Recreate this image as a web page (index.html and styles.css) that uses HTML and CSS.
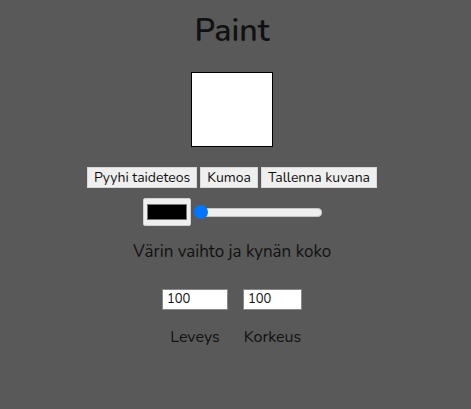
FILE: index.html
```html
<!DOCTYPE html>
<html>
<head>
<meta charset="utf-8">
<link rel="stylesheet" href="styles.css">
</head>
<body>
<div class="app">
  <h1 class="title">Paint</h1>
  <div class="canvas"></div>
  <div class="buttons">
    <button class="btn">Pyyhi taideteos</button>
    <button class="btn">Kumoa</button>
    <button class="btn">Tallenna kuvana</button>
  </div>
  <div class="tools">
    <div class="color"><div class="swatch"></div></div>
    <div class="slider"><div class="track"></div><div class="thumb"></div></div>
  </div>
  <p class="caption">Värin vaihto ja kynän koko</p>
  <div class="sizes">
    <div class="field"><div class="input">100</div><span class="lbl">Leveys</span></div>
    <div class="field"><div class="input">100</div><span class="lbl">Korkeus</span></div>
  </div>
</div>
</body>
</html>
```

FILE: styles.css
```css
html, body { margin: 0; padding: 0; }
body {
  background: #595959;
  font-family: "Nunito", "Open Sans", "Noto Sans", sans-serif;
  color: #111;
  width: 464px;
  height: 409px;
}
.app {
  display: flex;
  flex-direction: column;
  align-items: center;
}
.title {
  margin: 10px 0 0;
  font-size: 32px;
  font-weight: 600;
  line-height: 42px;
  color: #111;
}
.canvas {
  margin-top: 20px;
  width: 80px;
  height: 73px;
  background: #fff;
  border: 1px solid #000;
}
.buttons {
  margin-top: 20px;
  display: flex;
  gap: 3px;
}
.btn {
  font-family: inherit;
  font-size: 14px;
  color: #111;
  background: #efefef;
  border: 1px solid #d8d8d8;
  height: 21px;
  padding: 0 6px;
  line-height: 19px;
}
.tools {
  margin-top: 10px;
  display: flex;
  align-items: center;
  gap: 3px;
}
.color {
  width: 48px;
  height: 28px;
  box-sizing: border-box;
  background: #efefef;
  border: 1px solid #d0d0d0;
  border-radius: 2px;
  display: flex;
  align-items: center;
  justify-content: center;
}
.swatch {
  width: 38px;
  height: 14px;
  background: #000;
  border: 1px solid #777;
}
.slider {
  position: relative;
  width: 128px;
  height: 14px;
  display: flex;
  align-items: center;
}
.track {
  margin-left: 4px;
  width: 124px;
  height: 7px;
  background: #efefef;
  border: 1px solid #c6c6c6;
  border-radius: 4px;
}
.thumb {
  position: absolute;
  left: 0;
  top: 0;
  width: 14px;
  height: 14px;
  border-radius: 50%;
  background: #0075ff;
}
.caption {
  margin: 16px 0 0;
  font-size: 17px;
  line-height: 20px;
  color: #111;
}
.sizes {
  margin-top: 27px;
  display: flex;
  gap: 15px;
}
.field {
  display: flex;
  flex-direction: column;
  align-items: center;
}
.input {
  box-sizing: border-box;
  width: 66px;
  height: 21px;
  background: #fff;
  border: 1px solid #888;
  font-size: 13px;
  line-height: 19px;
  padding-left: 4px;
  color: #111;
  align-self: stretch;
}
.field:last-child .input { width: 59px; }
.lbl {
  margin-top: 16px;
  font-size: 16px;
  color: #111;
}
```
